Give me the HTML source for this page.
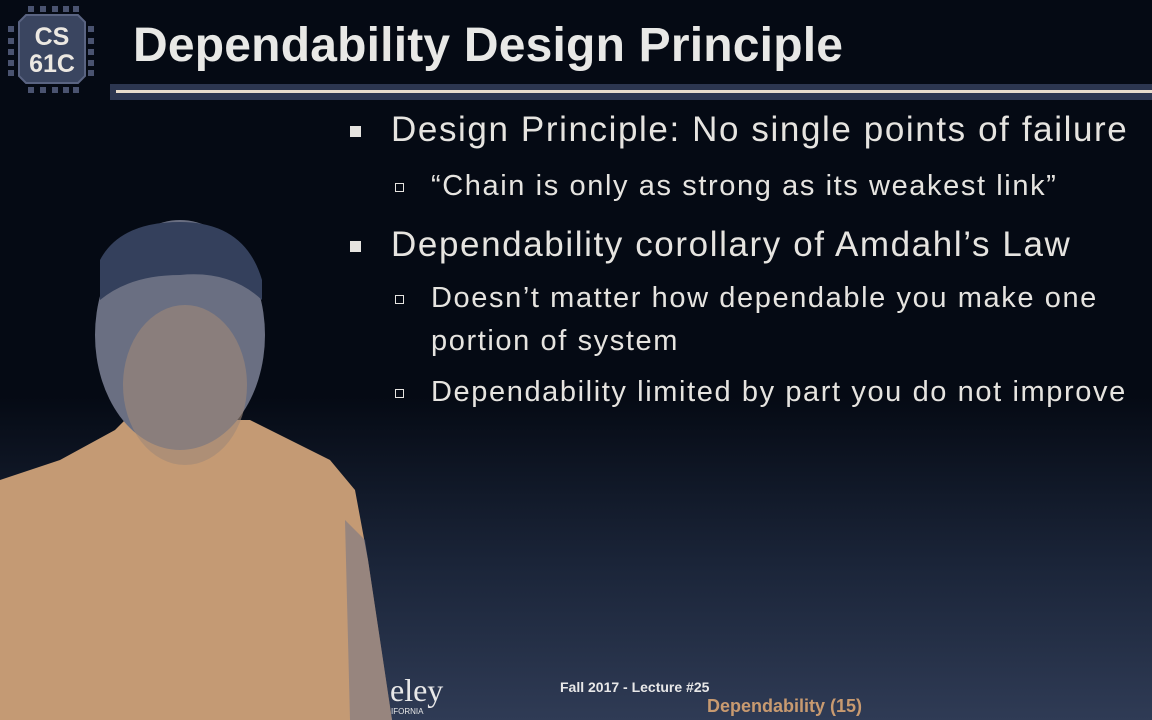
<!DOCTYPE html><html><head><style>
html,body{margin:0;width:1152px;height:720px;overflow:hidden}
body{background:linear-gradient(180deg,#050a14 0%,#050a14 55%,#1a2438 78%,#2f3b55 100%);position:relative;font-family:"Liberation Sans",sans-serif}
.t{position:absolute;color:#e6e4e0;white-space:nowrap}
.b{letter-spacing:1.6px}
</style></head><body>
<svg width="1152" height="720" style="position:absolute;left:0;top:0">
<g fill="#4a5370">
<rect x="28" y="6" width="6" height="6"/><rect x="40" y="6" width="6" height="6"/><rect x="52" y="6" width="6" height="6"/><rect x="63" y="6" width="6" height="6"/><rect x="73" y="6" width="6" height="6"/>
<rect x="28" y="87" width="6" height="6"/><rect x="40" y="87" width="6" height="6"/><rect x="52" y="87" width="6" height="6"/><rect x="63" y="87" width="6" height="6"/><rect x="73" y="87" width="6" height="6"/>
<rect x="8" y="26" width="6" height="6"/><rect x="8" y="38" width="6" height="6"/><rect x="8" y="49" width="6" height="6"/><rect x="8" y="60" width="6" height="6"/><rect x="8" y="70" width="6" height="6"/>
<rect x="88" y="26" width="6" height="6"/><rect x="88" y="38" width="6" height="6"/><rect x="88" y="49" width="6" height="6"/><rect x="88" y="60" width="6" height="6"/><rect x="88" y="70" width="6" height="6"/>
</g>
<polygon points="26,15 78,15 85,22 85,76 78,83 26,83 19,76 19,22" fill="#3a4560" stroke="#5a6482" stroke-width="2"/>
<text x="52" y="45" text-anchor="middle" font-family="Liberation Sans" font-weight="bold" font-size="25" fill="#ece8e2">CS</text>
<text x="52" y="72" text-anchor="middle" font-family="Liberation Sans" font-weight="bold" font-size="25" fill="#ece8e2">61C</text>
<rect x="110" y="84" width="1042" height="16" fill="#2c3650"/>
<rect x="116" y="90" width="1036" height="3" fill="#e8dccc"/>
<path d="M0,480 L60,460 L115,430 L125,420 L250,420 L290,440 L330,460 L355,490 L368,560 L380,640 L392,720 L0,720 Z" fill="#c49a74"/>
<path d="M345,520 L365,540 L392,720 L350,720 Z" fill="#6a7088" opacity="0.5"/>
<ellipse cx="180" cy="335" rx="85" ry="115" fill="#6a6f82"/>
<path d="M100,260 Q120,222 180,222 Q245,222 262,280 L262,300 Q230,270 180,275 Q130,275 100,300 Z" fill="#34405c"/>
<ellipse cx="185" cy="385" rx="62" ry="80" fill="#a08878" opacity="0.6"/>
</svg>
<div class="t" style="left:133px;top:18px;font-size:48px;font-weight:bold;letter-spacing:0.2px;color:#e8e8e6">Dependability Design Principle</div>
<div class="t b" style="left:350px;top:110px;font-size:35px"><span style="display:inline-block;width:11px;height:11px;background:#e6e4e0;vertical-align:middle;margin-right:30px"></span>Design Principle: No single points of failure</div>
<div class="t b" style="left:395px;top:170px;font-size:29px"><span style="display:inline-block;width:7px;height:7px;border:1.5px solid #e6e4e0;vertical-align:middle;margin-right:27px"></span>“Chain is only as strong as its weakest link”</div>
<div class="t b" style="left:350px;top:225px;font-size:35px"><span style="display:inline-block;width:11px;height:11px;background:#e6e4e0;vertical-align:middle;margin-right:30px"></span>Dependability corollary of Amdahl’s Law</div>
<div class="t b" style="left:395px;top:282px;font-size:29px"><span style="display:inline-block;width:7px;height:7px;border:1.5px solid #e6e4e0;vertical-align:middle;margin-right:27px"></span>Doesn’t matter how dependable you make one</div>
<div class="t b" style="left:431px;top:325px;font-size:29px">portion of system</div>
<div class="t b" style="left:395px;top:376px;font-size:29px"><span style="display:inline-block;width:7px;height:7px;border:1.5px solid #e6e4e0;vertical-align:middle;margin-right:27px"></span>Dependability limited by part you do not improve</div>
<div class="t" style="left:390px;top:672px;font-size:32px;font-family:'Liberation Serif',serif;color:#e8e8e8">eley</div>
<div class="t" style="left:391px;top:707px;font-size:8px;color:#e8e8e8">IFORNIA</div>
<div class="t" style="left:560px;top:679px;font-size:14px;font-weight:bold;color:#e8e8e8">Fall 2017 - Lecture #25</div>
<div class="t" style="left:707px;top:696px;font-size:18px;font-weight:bold;color:#c89a70">Dependability (15)</div>
</body></html>
